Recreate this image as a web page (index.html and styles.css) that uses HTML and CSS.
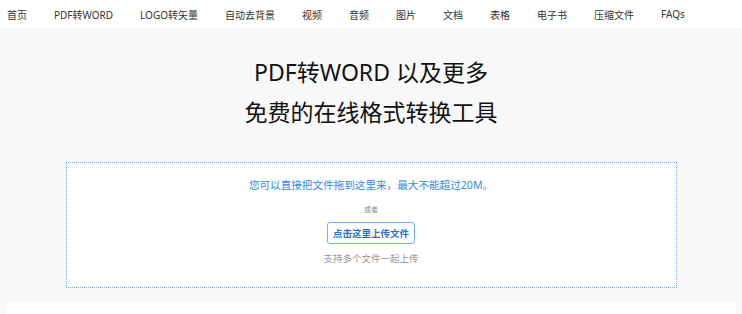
FILE: index.html
```html
<!DOCTYPE html>
<html lang="zh-CN">
<head>
<meta charset="utf-8">
<title>PDF转WORD 以及更多</title>
<link rel="stylesheet" href="styles.css">
</head>
<body>
<nav class="nav">
  <a class="nav-item">首页</a>
  <a class="nav-item">PDF转WORD</a>
  <a class="nav-item">LOGO转矢量</a>
  <a class="nav-item">自动去背景</a>
  <a class="nav-item">视频</a>
  <a class="nav-item">音频</a>
  <a class="nav-item">图片</a>
  <a class="nav-item">文档</a>
  <a class="nav-item">表格</a>
  <a class="nav-item">电子书</a>
  <a class="nav-item">压缩文件</a>
  <a class="nav-item">FAQs</a>
</nav>
<main class="main">
  <h1 class="title">
    <span class="title-line">PDF转WORD 以及更多</span>
    <span class="title-line">免费的在线格式转换工具</span>
  </h1>
  <section class="drop">
    <p class="drop-hint">您可以直接把文件拖到这里来，最大不能超过20M。</p>
    <p class="drop-or">或者</p>
    <button class="drop-btn">点击这里上传文件</button>
    <p class="drop-note">支持多个文件一起上传</p>
  </section>
  <section class="card"></section>
</main>
</body>
</html>
```
FILE: styles.css
```css
* { box-sizing: border-box; }
html, body { margin: 0; padding: 0; }
body {
  font-family: "Noto Sans", "Noto Sans CJK SC", sans-serif;
  background: #f8f8f8;
  color: #222;
  height: 314px;
  overflow: hidden;
}
.nav {
  height: 28px;
  background: #fff;
  display: flex;
  align-items: center;
  padding-left: 7px;
  gap: 27px;
  font-size: 10px;
  color: #333;
}
.nav-item { white-space: nowrap; }
.main {
  display: flex;
  flex-direction: column;
  align-items: center;
}
.title {
  margin: 24px 0 0;
  font-weight: 400;
  font-size: 23px;
  line-height: 40px;
  display: flex;
  flex-direction: column;
  align-items: center;
  color: #111;
}
.drop {
  margin-top: 30px;
  width: 611px;
  height: 126px;
  background: #fff;
  border: 1px dotted #6cb3f5;
  display: flex;
  flex-direction: column;
  align-items: center;
}
.drop-hint {
  margin: 14px 0 0;
  font-size: 10.6px;
  line-height: 16px;
  color: #2f8ae8;
}
.drop-or {
  margin: 12px 0 0;
  font-size: 7px;
  line-height: 10px;
  color: #888;
}
.drop-btn {
  margin-top: 7px;
  width: 88px;
  height: 22px;
  padding: 0;
  background: #fff;
  border: 1px solid #6cb3f5;
  border-radius: 3px;
  font-family: inherit;
  font-size: 9.5px;
  font-weight: 700;
  color: #1d6fe0;
}
.drop-note {
  margin: 9px 0 0;
  font-size: 9.5px;
  line-height: 12px;
  color: #999;
}
.card {
  margin-top: 14px;
  width: 730px;
  height: 12px;
  background: #fff;
}
```
